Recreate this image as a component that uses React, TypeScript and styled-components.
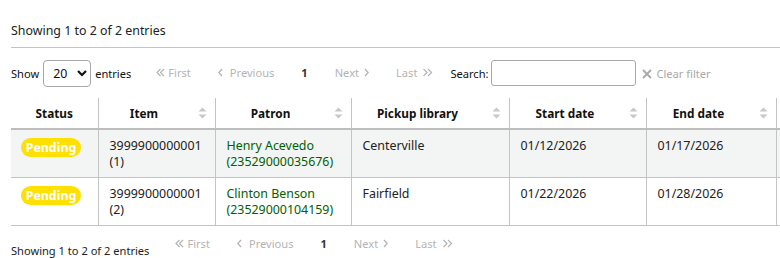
import styled, { createGlobalStyle } from "styled-components";

interface Hold {
  item: string;
  copy: number;
  patron: string;
  cardnumber: string;
  library: string;
  start: string;
  end: string;
}

const holds: Hold[] = [
  {
    item: "3999900000001",
    copy: 1,
    patron: "Henry Acevedo",
    cardnumber: "23529000035676",
    library: "Centerville",
    start: "01/12/2026",
    end: "01/17/2026",
  },
  {
    item: "3999900000001",
    copy: 2,
    patron: "Clinton Benson",
    cardnumber: "23529000104159",
    library: "Fairfield",
    start: "01/22/2026",
    end: "01/28/2026",
  },
];

// last column holds the row actions, its header is blank
const columns = [
  { key: "status", label: "Status", width: 87, sortable: false },
  { key: "item", label: "Item", width: 117, sortable: true },
  { key: "patron", label: "Patron", width: 136, sortable: true },
  { key: "library", label: "Pickup library", width: 158, sortable: true },
  { key: "start", label: "Start date", width: 137, sortable: true },
  { key: "end", label: "End date", width: 130, sortable: true },
  { key: "actions", label: "", width: 120, sortable: false },
];

const GlobalStyle = createGlobalStyle`
  html, body {
    margin: 0;
    padding: 0;
    background: #ffffff;
    overflow: hidden;
  }
  body {
    font-family: "Noto Sans", "Open Sans", sans-serif;
    font-size: 12.4px;
    color: #222222;
  }
`;

const DoubleLeft = () => (
  <svg width="9" height="9" viewBox="0 0 9 9" fill="none" stroke="currentColor" strokeWidth="1.2">
    <path d="M4.5 1 L1 4.5 L4.5 8 M8 1 L4.5 4.5 L8 8" />
  </svg>
);

const DoubleRight = () => (
  <svg width="11" height="9" viewBox="0 0 11 9" fill="none" stroke="currentColor" strokeWidth="1.2">
    <path d="M1.5 1 L5 4.5 L1.5 8 M6 1 L9.5 4.5 L6 8" />
  </svg>
);

const SingleLeft = () => (
  <svg width="5" height="9" viewBox="0 0 5 9" fill="none" stroke="currentColor" strokeWidth="1.3">
    <path d="M4 1 L0.8 4.5 L4 8" />
  </svg>
);

const SingleRight = () => (
  <svg width="5" height="9" viewBox="0 0 5 9" fill="none" stroke="currentColor" strokeWidth="1.3">
    <path d="M1 1 L4.2 4.5 L1 8" />
  </svg>
);

const Pager = ({ offset, top }: { offset: number; top: number }) => (
  <PagerRow $offset={offset} $top={top}>
    <PageLink $gap={3}>
      <DoubleLeft />
      First
    </PageLink>
    <PageLink $gap={7}>
      <SingleLeft />
      Previous
    </PageLink>
    <CurrentPage>1</CurrentPage>
    <PageLink $gap={5}>
      Next
      <SingleRight />
    </PageLink>
    <PageLink $gap={5}>
      Last
      <DoubleRight />
    </PageLink>
  </PagerRow>
);

const SortArrows = () => (
  <SortIcon width="9" height="12" viewBox="0 0 9 12">
    <path d="M4.5 0.5 L8.5 4.5 L0.5 4.5 Z" fill="#c8c8c8" />
    <path d="M0.5 7.5 L8.5 7.5 L4.5 11.5 Z" fill="#c8c8c8" />
  </SortIcon>
);

const App = () => {
  return (
    <Page>
      <GlobalStyle />
      <Info>Showing 1 to 2 of 2 entries</Info>
      <Divider />
      <Toolbar>
        <Length>
          Show
          <Select>
            <span>20</span>
            <svg width="10" height="7" viewBox="0 0 10 7" fill="none" stroke="#111" strokeWidth="2.2">
              <path d="M1 1 L5 5 L9 1" />
            </svg>
          </Select>
          entries
        </Length>
        <Pager offset={25} top={-3} />
        <SearchLabel>
          Search:
          <SearchInput />
        </SearchLabel>
        <ClearFilter>
          <svg width="10" height="10" viewBox="0 0 10 10" stroke="currentColor" strokeWidth="1.8">
            <path d="M1 1 L9 9 M9 1 L1 9" />
          </svg>
          Clear filter
        </ClearFilter>
      </Toolbar>
      <Table>
        <colgroup>
          {columns.map((c) => (
            <col key={c.key} style={{ width: c.width }} />
          ))}
        </colgroup>
        <thead>
          <tr>
            {columns.map((c) => (
              <HeadCell key={c.key} $sortable={c.sortable}>
                {c.label}
                {c.sortable && <SortArrows />}
              </HeadCell>
            ))}
          </tr>
        </thead>
        <tbody>
          {holds.map((h, i) => (
            <Row key={h.copy} $odd={i % 2 === 0}>
              <Cell>
                <Badge>Pending</Badge>
              </Cell>
              <Cell>
                {h.item}
                <br />({h.copy})
              </Cell>
              <Cell>
                <PatronLink>
                  {h.patron}
                  <br />({h.cardnumber})
                </PatronLink>
              </Cell>
              <Cell>{h.library}</Cell>
              <Cell>{h.start}</Cell>
              <Cell>{h.end}</Cell>
              <Cell />
            </Row>
          ))}
        </tbody>
      </Table>
      <Footer>
        <FooterInfo>Showing 1 to 2 of 2 entries</FooterInfo>
        <Pager offset={26} top={-1} />
      </Footer>
    </Page>
  );
};

const Page = styled.div`
  width: 1000px;
  padding: 22px 0 0 11px;
`;

const Info = styled.div`
  line-height: 18px;
`;

const Divider = styled.div`
  height: 1px;
  background: #c4c4c4;
  margin-top: 7px;
`;

const Toolbar = styled.div`
  display: flex;
  align-items: center;
  height: 27px;
  margin-top: 12px;
  font-size: 11.1px;
`;

const Length = styled.label`
  display: flex;
  align-items: center;
  gap: 4px;
  color: #111111;
`;

const Select = styled.div`
  display: flex;
  align-items: center;
  justify-content: space-between;
  box-sizing: border-box;
  width: 48px;
  height: 27px;
  padding: 0 3px 0 9px;
  border: 1px solid #a8a8a8;
  border-radius: 4px;
  font-size: 12.4px;
  color: #111111;
`;

const PagerRow = styled.div<{ $offset: number; $top: number }>`
  display: flex;
  align-items: center;
  gap: 27px;
  margin-left: ${({ $offset }) => $offset}px;
  margin-top: ${({ $top }) => $top}px;
  font-size: 11.1px;
`;

const PageLink = styled.span<{ $gap: number }>`
  display: flex;
  align-items: center;
  gap: ${({ $gap }) => $gap}px;
  color: #b4b4b4;
`;

const CurrentPage = styled.span`
  font-weight: 700;
  color: #333333;
`;

const SearchLabel = styled.label`
  display: flex;
  align-items: center;
  gap: 3px;
  margin-left: 17px;
  color: #111111;
`;

const SearchInput = styled.div`
  box-sizing: border-box;
  width: 145px;
  height: 26px;
  border: 1px solid #a8a8a8;
  border-radius: 3px;
  margin-top: -1px;
`;

const ClearFilter = styled.span`
  display: flex;
  align-items: center;
  gap: 4px;
  margin-left: 6px;
  font-size: 11.1px;
  color: #a8a8a8;
`;

const Table = styled.table`
  border-collapse: collapse;
  table-layout: fixed;
  width: 885px;
  margin-top: 11px;
`;

const HeadCell = styled.th<{ $sortable: boolean }>`
  position: relative;
  height: 30px;
  padding: 0 ${({ $sortable }) => ($sortable ? "25px" : "0")} 0 0;
  font-size: 11.8px;
  font-weight: 700;
  text-align: center;
  color: #111111;
  border-left: 1px solid #c4c4c4;
  border-bottom: 2px solid #bdbdbd;
  &:first-child {
    border-left: none;
  }
`;

const SortIcon = styled.svg`
  position: absolute;
  right: 8px;
  top: 9px;
`;

const Row = styled.tr<{ $odd: boolean }>`
  background: ${({ $odd }) => ($odd ? "#f3f4f4" : "#ffffff")};
`;

const Cell = styled.td`
  height: 48px;
  box-sizing: border-box;
  vertical-align: top;
  padding: 8px 8px 0 11px;
  line-height: 16px;
  color: #222222;
  border-left: 1px solid #c4c4c4;
  border-bottom: 1px solid #c4c4c4;
  &:first-child {
    border-left: none;
    padding-left: 10px;
  }
`;

const Badge = styled.span`
  display: inline-block;
  width: 60px;
  height: 19px;
  line-height: 19px;
  border-radius: 10px;
  background: #ffe000;
  color: #ffffff;
  font-weight: 700;
  text-align: center;
`;

const PatronLink = styled.span`
  color: #006100;
`;

const Footer = styled.div`
  display: flex;
  align-items: flex-start;
  margin-top: 11px;
`;

const FooterInfo = styled.div`
  padding-top: 5px;
  line-height: 18px;
  font-size: 11.1px;
`;

export default App;
